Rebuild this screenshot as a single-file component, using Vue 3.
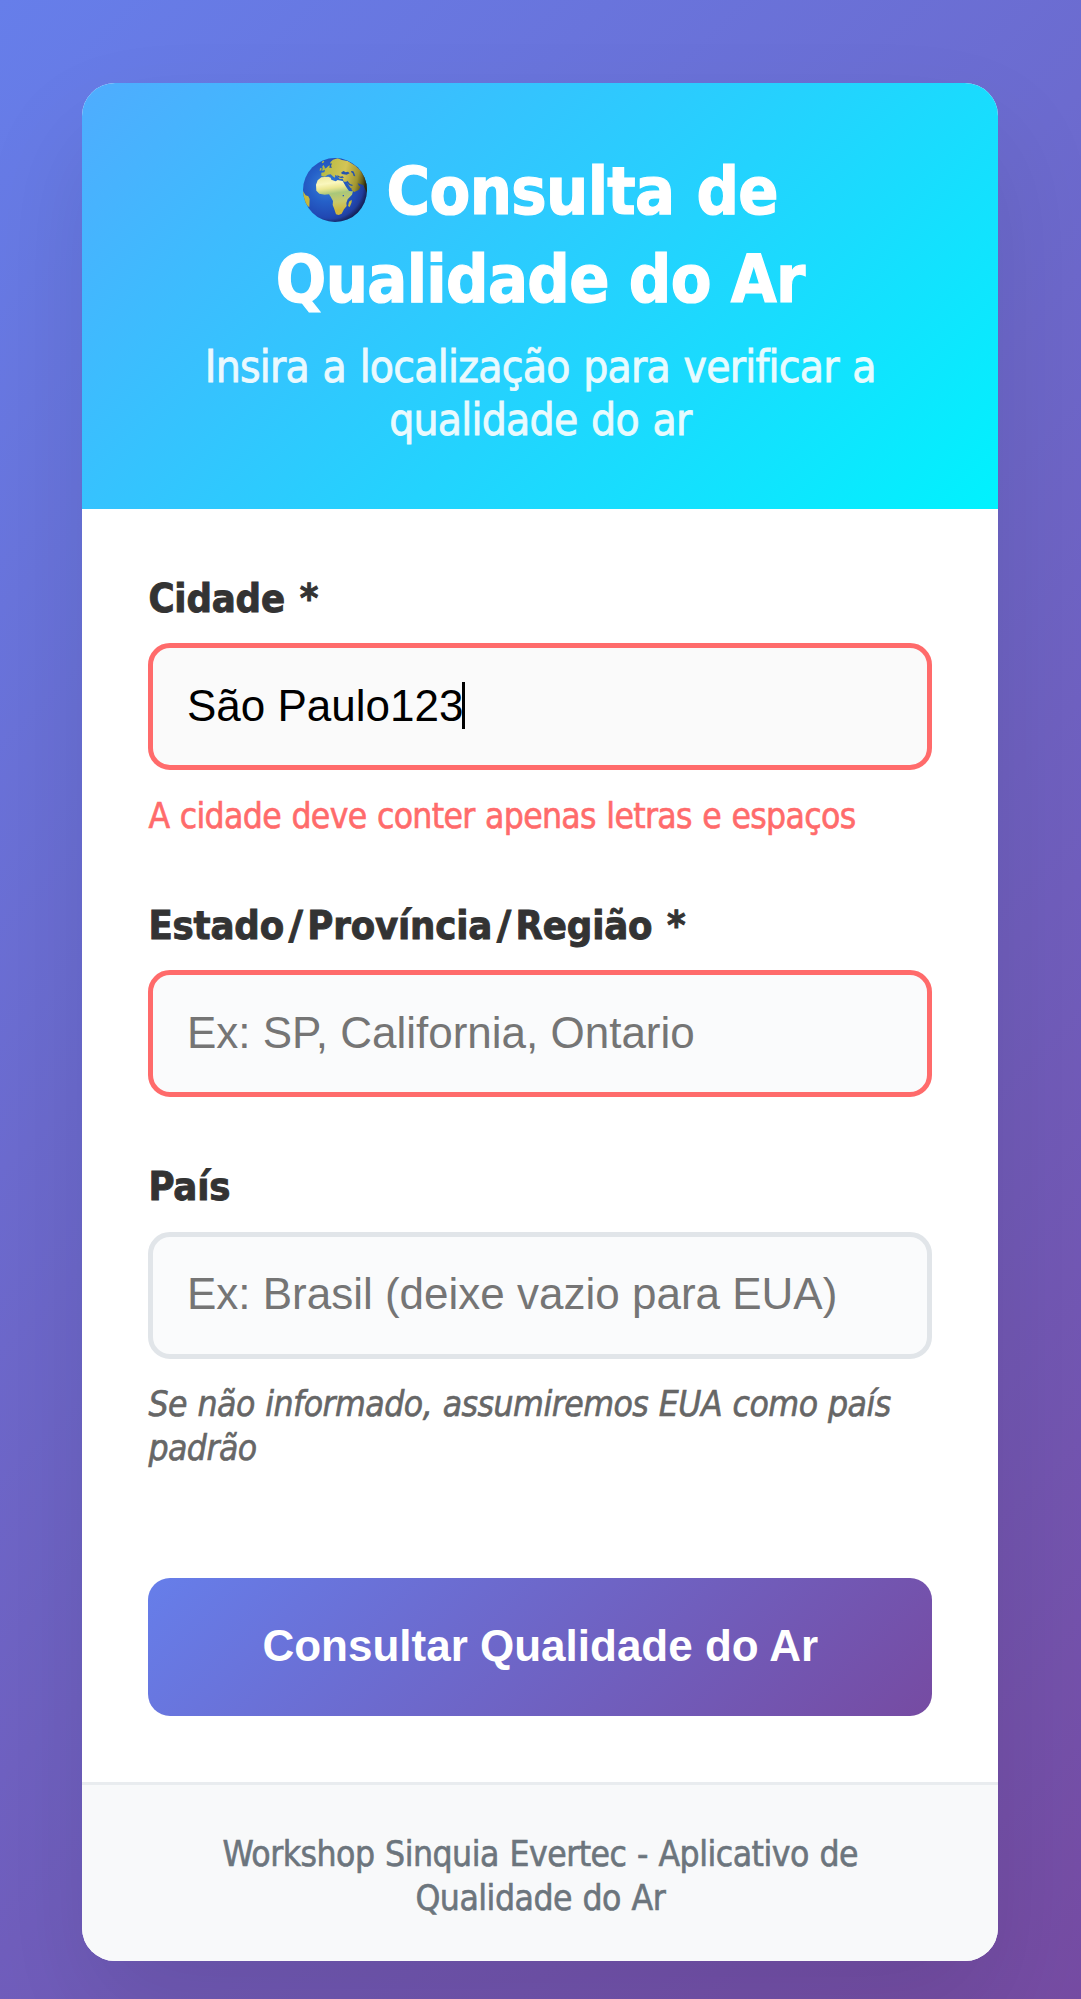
<script setup>
import { ref } from 'vue'

const city = ref('São Paulo123')
const fields = [
  { id: 'city', label: ['Cidade *'], invalid: true, typed: true, error: 'A cidade deve conter apenas letras e espaços' },
  { id: 'state', label: ['Estado', 'Província', 'Região *'], invalid: true, placeholder: 'Ex: SP, California, Ontario' },
  { id: 'country', label: ['País'], placeholder: 'Ex: Brasil (deixe vazio para EUA)', hint: ['Se não informado, assumiremos EUA como país', 'padrão'] },
]
</script>

<template>
  <main class="page">
    <section class="card">
      <header class="header">
        <h1 class="title">
          <span class="line first">
            <svg class="globe" viewBox="42 39 192 192" aria-hidden="true">
              <defs>
                <radialGradient id="sea" cx="0.36" cy="0.42" r="0.66">
                  <stop offset="0" stop-color="#3a80d6" />
                  <stop offset="0.4" stop-color="#2560c8" />
                  <stop offset="0.75" stop-color="#2149b4" />
                  <stop offset="1" stop-color="#1f3284" />
                </radialGradient>
                <linearGradient id="land" gradientUnits="userSpaceOnUse" x1="110" y1="95" x2="125" y2="200">
                  <stop offset="0" stop-color="#efeaa0" />
                  <stop offset="0.2" stop-color="#faf7bd" />
                  <stop offset="0.34" stop-color="#ece792" />
                  <stop offset="0.5" stop-color="#a9c77a" />
                  <stop offset="0.75" stop-color="#c9c96a" />
                  <stop offset="1" stop-color="#d0b63c" />
                </linearGradient>
                <linearGradient id="asia" x1="0" y1="0.3" x2="1" y2="0.5">
                  <stop offset="0" stop-color="#b4ba42" />
                  <stop offset="0.5" stop-color="#d3c556" />
                  <stop offset="0.8" stop-color="#a09530" />
                  <stop offset="1" stop-color="#35330f" />
                </linearGradient>
                <radialGradient id="shade" cx="0.42" cy="0.43" r="0.62">
                  <stop offset="0.84" stop-color="#000" stop-opacity="0" />
                  <stop offset="1" stop-color="#050510" stop-opacity="0.5" />
                </radialGradient>
                <clipPath id="disc"><circle cx="138" cy="135" r="96" /></clipPath>
              </defs>
              <g clip-path="url(#disc)">
                <rect x="42" y="39" width="192" height="192" fill="url(#sea)" />
                <path fill="url(#asia)" d="M97 93V83l9-1 2-6-4-4 8-3 6-6 7-3-1-8 8-8 14-4 13 5 17 3 23 14 24 22 13 35-1 27-7-15-5-11-8-2-9-3 4 7 5 3-6 10-13 6-5-3-11-16-7-12-9 0-3-9-9 1-5-7-8-6-1 9-5-3-8-7-9 1-8 6z" />
                <path fill="#2754ad" d="M157 82l7-4 6 4 7-2 5 5-9 4-15-2zM187 78l6 1 3 6 3 9-5-1-3-8-5-4zM145 90l8 5 8-1 4 4-9 1-10-4zM123 57l6-2-3 8 3 5-8 0zM175 107l8 10 9 3-3 3-9-3-8-9z" />
                <path fill="#b4ba42" d="M100 64l4-4 4 9-2 7-8 1 3-5zM93 70l5-1-1 7-5 1zM98 51l6-4 2 4-6 4z" />
                <path fill="url(#land)" d="M81 119l5-13 11-9 21-2 7 3 2 6 13 5 6-4 15 3 10 17 9 13 8 1 4 0-3 10-13 14-4 11 1 9-8 10-7 13-9 4-8-2-6-18-4-10 1-12-7-13-5-7-13 1-16-3-9-9z" />
                <path fill="#2459bd" d="M166 110l4 3 12 18 8-3-7 6-5-2-10-15zM161 150l4 0 0 4-4 0z" />
                <path fill="#c6b83c" d="M180 170l8-6 0 8-6 14-5-3zM42 139l8 12 8 3 4 8-1 25-13-11-8-25z" />
                <rect x="42" y="39" width="192" height="192" fill="url(#shade)" />
              </g>
            </svg>
            <span>Consulta de</span>
          </span>
          <span class="line">Qualidade do Ar</span>
        </h1>
        <p class="subtitle">
          <span class="line">Insira a localização para verificar a</span>
          <span class="line">qualidade do ar</span>
        </p>
      </header>

      <form class="form" @submit.prevent>
        <div v-for="f in fields" :key="f.id" class="group" :class="f.id">
          <label class="label"><template v-for="(part, i) in f.label" :key="part"><span v-if="i" class="slash">/</span>{{ part }}</template></label>
          <div class="input" :class="{ invalid: f.invalid, focused: f.typed }">
            <template v-if="f.typed"><span>{{ city }}</span><i class="caret"></i></template>
            <span v-else class="placeholder">{{ f.placeholder }}</span>
          </div>
          <p v-if="f.error" class="error">{{ f.error }}</p>
          <p v-if="f.hint" class="hint"><span v-for="h in f.hint" :key="h" class="line">{{ h }}</span></p>
        </div>
        <button class="submit" type="submit">Consultar Qualidade do Ar</button>
      </form>

      <footer class="footer">
        <span class="line">Workshop Sinquia Evertec - Aplicativo de</span>
        <span class="line">Qualidade do Ar</span>
      </footer>
    </section>
  </main>
</template>

<style>
html, body { margin: 0; overflow: hidden; }
</style>

<style scoped>
.page {
  box-sizing: border-box;
  height: 1999px;
  padding: 82.5px 82.8px 0 82.4px;
  overflow: hidden;
  background: linear-gradient(135deg, #667eea 0%, #764ba2 100%) 0 0 / 100% 2043px;
  font-family: Tahoma, "DejaVu Sans Condensed", "DejaVu Sans", sans-serif;
  font-stretch: condensed;
}
.card {
  box-sizing: border-box;
  height: 1878.2px;
  display: flex;
  flex-direction: column;
  background: #fff;
  border-radius: 33px;
  box-shadow: 0 55px 110px rgba(0, 0, 0, 0.1);
  overflow: hidden;
}
.line { display: block; white-space: nowrap; }
.header {
  box-sizing: border-box;
  flex: none;
  height: 426.2px;
  padding-top: 65px;
  text-align: center;
  color: #fff;
  background: linear-gradient(135deg, #4facfe 0%, #00f2fe 100%);
}
.title {
  margin: 0;
  font-size: 66px;
  line-height: 88px;
  font-weight: 700;
  letter-spacing: -0.65px;
  -webkit-text-stroke: 1.2px currentColor;
}
.title .line.first {
  display: flex;
  justify-content: center;
  align-items: center;
  gap: 20px;
  word-spacing: 2px;
}
.globe { width: 64px; height: 64px; margin-top: -3px; }
.subtitle {
  margin: 16px 0 0;
  font-size: 44px;
  line-height: 53.3px;
  letter-spacing: -0.78px;
  word-spacing: 1.8px;
  -webkit-text-stroke: 0.8px currentColor;
  opacity: 0.9;
}
.form { flex: none; box-sizing: border-box; height: 1273.5px; padding: 66px 66px 0; }
.group { height: 261.5px; }
.group.city { height: 327.3px; }
.group.country { height: 414.7px; }
.label {
  display: block;
  height: 68.5px;
  color: #333;
  font-size: 39.6px;
  line-height: 47px;
  font-weight: 700;
  letter-spacing: -0.15px;
  word-spacing: 2.5px;
  -webkit-text-stroke: 0.9px currentColor;
}
.slash { font-family: "DejaVu Sans", sans-serif; font-stretch: normal; margin: 0 4.5px; line-height: 1; }
.input {
  box-sizing: border-box;
  height: 126.7px;
  display: flex;
  align-items: center;
  padding: 0 33px 2px 33.5px;
  border: 5.5px solid #e1e5e9;
  border-radius: 22px;
  background: #fafbfc;
  font: 44px "Liberation Sans", Arial, sans-serif;
  color: #000;
  white-space: nowrap;
}
.input.invalid { border-color: #ff6b6b; }
.input.focused { background: #fafafa; }
.placeholder { color: #757575; }
.caret { width: 3px; height: 47px; margin-left: -1px; background: #000; }
.error, .hint {
  margin: 24px 0 0;
  font-size: 35.2px;
  line-height: 44px;
  word-spacing: 1px;
  -webkit-text-stroke: 0.6px currentColor;
}
.error { color: #ff6b6b; letter-spacing: -0.67px; }
.hint { margin-top: 23px; color: #666; font-style: italic; letter-spacing: -0.52px; }
.submit {
  display: block;
  width: 100%;
  height: 137.5px;
  padding: 0 0 2px;
  border: 0;
  border-radius: 22px;
  background: linear-gradient(135deg, #667eea 0%, #764ba2 100%);
  color: #fff;
  font: 700 44px "Liberation Sans", Arial, sans-serif;
}
.footer {
  flex: 1;
  padding-top: 47px;
  border-top: 3px solid #e9ecef;
  background: #f8f9fa;
  color: #6c757d;
  font-size: 35.2px;
  line-height: 44px;
  letter-spacing: -0.5px;
  word-spacing: 1px;
  -webkit-text-stroke: 0.6px currentColor;
  text-align: center;
}
</style>
